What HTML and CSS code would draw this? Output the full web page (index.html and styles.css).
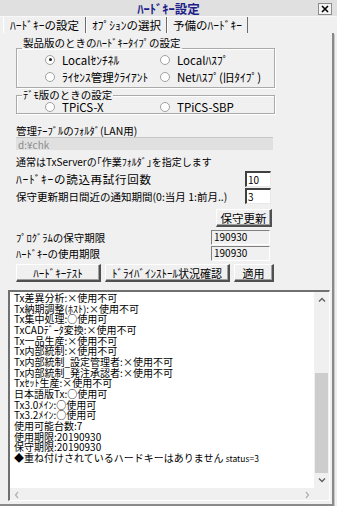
FILE: index.html
```html
<!DOCTYPE html>
<html lang="ja">
<head>
    <meta charset="UTF-8">
    <meta name="viewport" content="width=device-width, initial-scale=1.0">
    <title>ﾊｰﾄﾞｷｰ設定</title>
    <link rel="stylesheet" href="styles.css">
</head>
<body>
    <div class="window">
        <div class="titlebar">
            <span class="title">ﾊｰﾄﾞｷｰ設定</span>
            <span class="close-btn">
                <svg width="14" height="12" viewBox="0 0 14 12">
                    <rect x="0.5" y="0.5" width="13" height="11" fill="#f4f4f4" stroke="#8c8c8c"/>
                    <path d="M4 3 L10 9 M10 3 L4 9" stroke="#000" stroke-width="1.6"/>
                </svg>
            </span>
        </div>

        <div class="tabs">
            <div class="tab active">ﾊｰﾄﾞｷｰの設定</div>
            <div class="tab">ｵﾌﾟｼｮﾝの選択</div>
            <div class="tab">予備のﾊｰﾄﾞｷｰ</div>
        </div>

        <div class="panel">
            <div class="form">
                <!-- 製品版 -->
                <div class="group group-product">
                    <div class="group-title">製品版のときのﾊｰﾄﾞｷｰﾀｲﾌﾟの設定</div>
                    <div class="radios">
                        <label class="radio checked"><i></i>Localｾﾝﾁﾈﾙ</label>
                        <label class="radio"><i></i>Localﾊｽﾌﾟ</label>
                        <label class="radio"><i></i>ﾗｲｾﾝｽ管理ｸﾗｲｱﾝﾄ</label>
                        <label class="radio"><i></i>Netﾊｽﾌﾟ(旧ﾀｲﾌﾟ)</label>
                    </div>
                </div>

                <!-- デモ版 -->
                <div class="group group-demo">
                    <div class="group-title">ﾃﾞﾓ版のときの設定</div>
                    <div class="radios">
                        <label class="radio"><i></i>TPiCS-X</label>
                        <label class="radio"><i></i>TPiCS-SBP</label>
                    </div>
                </div>

                <div class="label folder-label">管理ﾃｰﾌﾞﾙのﾌｫﾙﾀﾞ(LAN用)</div>
                <div class="field-disabled">d:¥chk</div>
                <div class="label note">通常はTxServerの｢作業ﾌｫﾙﾀﾞ｣を指定します</div>

                <div class="row row-retry">
                    <span class="label">ﾊｰﾄﾞｷｰの読込再試行回数</span>
                    <span class="input">10</span>
                </div>
                <div class="row row-notice">
                    <span class="label">保守更新期日間近の通知期間(0:当月 1:前月..)</span>
                    <span class="input">3</span>
                </div>
                <div class="row-right">
                    <button class="btn btn-renew">保守更新</button>
                </div>
                <div class="row row-date">
                    <span class="label">ﾌﾟﾛｸﾞﾗﾑの保守期限</span>
                    <span class="readonly">190930</span>
                </div>
                <div class="row row-date">
                    <span class="label">ﾊｰﾄﾞｷｰの使用期限</span>
                    <span class="readonly">190930</span>
                </div>

                <div class="button-row">
                    <button class="btn btn-test">ﾊｰﾄﾞｷｰﾃｽﾄ</button>
                    <button class="btn btn-driver">ﾄﾞﾗｲﾊﾞｲﾝｽﾄｰﾙ状況確認</button>
                    <button class="btn btn-apply">適用</button>
                </div>
            </div>

            <!-- 結果 -->
            <div class="log">
                <div class="log-text">
                    <div>Tx差異分析:×使用不可</div>
                    <div>Tx納期調整(ﾎｽﾄ):×使用不可</div>
                    <div>Tx集中処理:○使用可</div>
                    <div>TxCADﾃﾞｰﾀ変換:×使用不可</div>
                    <div>Tx一品生産:×使用不可</div>
                    <div>Tx内部統制:×使用不可</div>
                    <div>Tx内部統制_設定管理者:×使用不可</div>
                    <div>Tx内部統制_発注承認者:×使用不可</div>
                    <div>Txｾｯﾄ生産:×使用不可</div>
                    <div>日本語版Tx:○使用可</div>
                    <div>Tx3.0ﾒｲﾝ:○使用可</div>
                    <div>Tx3.2ﾒｲﾝ:○使用可</div>
                    <div>使用可能台数:7</div>
                    <div>使用期限:20190930</div>
                    <div>保守期限:20190930</div>
                    <div>◆重ね付けされているハードキーはありません <span class="small">status=3</span></div>
                </div>
                <div class="vscroll">
                    <span class="arrow">
                        <svg width="8" height="5" viewBox="0 0 8 5"><path d="M1 4.5 L4 1.5 L7 4.5" fill="none" stroke="#606060" stroke-width="1.4"/></svg>
                    </span>
                    <span class="track"><span class="thumb"></span></span>
                    <span class="arrow">
                        <svg width="8" height="5" viewBox="0 0 8 5"><path d="M1 0.5 L4 3.5 L7 0.5" fill="none" stroke="#606060" stroke-width="1.4"/></svg>
                    </span>
                </div>
                <div class="hscroll">
                    <span class="arrow">
                        <svg width="5" height="8" viewBox="0 0 5 8"><path d="M4 1 L1.5 4 L4 7" fill="none" stroke="#b0b0b0" stroke-width="1.2"/></svg>
                    </span>
                    <span class="arrow">
                        <svg width="5" height="8" viewBox="0 0 5 8"><path d="M1 1 L3.5 4 L1 7" fill="none" stroke="#b0b0b0" stroke-width="1.2"/></svg>
                    </span>
                </div>
                <div class="corner"></div>
            </div>
        </div>
    </div>
</body>
</html>
```

FILE: styles.css
```css
body {
    margin: 0;
    background: #f4f4f4;
    font-family: "Noto Sans CJK JP", sans-serif;
    font-size: 11px;
    color: #000;
}
.window {
    width: 337px;
    height: 506px;
    overflow: hidden;
    background: #f0f0f0;
    display: flex;
    flex-direction: column;
}
.titlebar {
    height: 17px;
    display: flex;
    align-items: center;
    padding: 1px 0 0 19px;
    background: #e0e0e0;
    border-bottom: 1px solid #f8f8f8;
    box-sizing: border-box;
}
.title {
    flex: 1;
    text-align: center;
    font-weight: bold;
    font-size: 12.5px;
    line-height: 15px;
    color: #1e1e8a;
}
.close-btn {
    width: 14px;
    height: 12px;
    margin-right: 5px;
    display: flex;
}
.tabs {
    display: flex;
    height: 16px;
    padding-left: 3px;
}
.tab {
    padding: 0 5px;
    line-height: 16px;
    font-size: 11.5px;
    border-right: 1px solid #6c6c6c;
    border-left: 1px solid #ffffff;
}
.tab.active {
    padding: 0 6px;
}
.panel {
    flex: 1;
    margin-right: 3px;
    border-right: 2px solid #8a8a8a;
    border-bottom: 2px solid #8a8a8a;
    padding-left: 8px;
    padding-bottom: 3px;
    display: flex;
    flex-direction: column;
    box-shadow: 1px 1px 0 #c8c8c8;
}
.form {
    padding-left: 8px;
}
.group {
    width: 259px;
    box-sizing: border-box;
    border: 1px solid #aaaaaa;
    box-shadow: 1px 1px 0 #ffffff, inset 1px 1px 0 #ffffff;
}
.group-title {
    width: fit-content;
    line-height: 12px;
    padding: 0 1px;
    margin-left: 5px;
    background: #f0f0f0;
    font-size: 10.5px;
}
.group-product {
    margin-top: 15px;
    padding-bottom: 2px;
}
.group-product .group-title {
    margin-top: -12px;
}
.group-demo {
    margin-top: 7px;
}
.group-demo .group-title {
    margin-top: -7px;
}
.radios {
    display: grid;
    grid-template-columns: 115px 1fr;
    padding-left: 28px;
    margin-top: 2px;
    font-size: 11.5px;
}
.radio {
    display: flex;
    align-items: center;
    height: 17px;
    gap: 7px;
    white-space: nowrap;
}
.group-demo .radios {
    margin-top: -1px;
}
.group-demo .radio {
    height: 13px;
}
.radio i {
    width: 8px;
    height: 8px;
    border-radius: 50%;
    border: 1px solid #a0a0a0;
    background: #ffffff;
    display: flex;
    align-items: center;
    justify-content: center;
}
.radio.checked i::after {
    content: "";
    width: 3px;
    height: 3px;
    border-radius: 50%;
    background: #202020;
}
.label {
    line-height: 13px;
    white-space: nowrap;
}
.folder-label {
    margin-top: 10px;
    font-size: 10.5px;
}
.field-disabled {
    width: 257px;
    height: 13px;
    line-height: 13px;
    background: #e0e0e0;
    color: #8c8c8c;
    padding-left: 2px;
    box-sizing: border-box;
    border-top: 1px solid #c8c8c8;
    font-size: 10px;
}
.note {
    margin-top: 5px;
    font-size: 10px;
}
.row {
    display: flex;
    align-items: center;
    justify-content: space-between;
    width: 255px;
}
.row-retry {
    margin-top: 3px;
}
.row-retry .label {
    font-size: 11.5px;
    letter-spacing: 0.7px;
}
.row-notice .label {
    font-size: 10.5px;
}
.input {
    width: 26px;
    height: 16px;
    box-sizing: border-box;
    background: #ffffff;
    border-top: 2px solid #404040;
    border-left: 2px solid #404040;
    border-right: 1px solid #e8e8e8;
    border-bottom: 1px solid #e8e8e8;
    line-height: 13px;
    padding-left: 1px;
    font-size: 10px;
}
.row-notice {
    margin-top: 1px;
}
.row-right {
    width: 256px;
    display: flex;
    justify-content: flex-end;
    margin-top: 5px;
}
.btn {
    font-family: "Noto Sans CJK JP", sans-serif;
    font-size: 11px;
    height: 18px;
    padding: 0;
    background: #f0f0f0;
    border-top: 1px solid #ffffff;
    border-left: 1px solid #ffffff;
    border-right: 2px solid #505050;
    border-bottom: 2px solid #505050;
    box-shadow: inset -1px -1px 0 #a0a0a0;
    line-height: 14px;
    white-space: nowrap;
}
.btn-renew {
    width: 56px;
    font-size: 11.5px;
}
.row-date {
    margin-top: 3px;
    width: 254px;
}
.row-date .label {
    font-size: 10.5px;
}
.row-date + .row-date {
    margin-top: 1px;
}
.readonly {
    width: 59px;
    height: 15px;
    box-sizing: border-box;
    border-top: 1px solid #808080;
    border-left: 1px solid #808080;
    border-right: 1px solid #ffffff;
    border-bottom: 1px solid #ffffff;
    line-height: 12px;
    padding-left: 2px;
    font-size: 10px;
}
.button-row {
    display: flex;
    gap: 4px;
    margin-top: 3px;
}
.btn-test {
    width: 85px;
}
.btn-driver {
    width: 125px;
}
.btn-apply {
    width: 40px;
}
.log {
    flex: 1;
    margin-top: 8px;
    margin-right: 2px;
    display: grid;
    grid-template-columns: 1fr 15px;
    grid-template-rows: 1fr 12px;
    border-top: 2px solid #707070;
    border-left: 2px solid #707070;
    border-right: 1px solid #ffffff;
    border-bottom: 1px solid #ffffff;
    background: #ffffff;
    overflow: hidden;
}
.log-text {
    padding: 1px 0 0 4px;
    font-size: 10px;
    line-height: 10.67px;
    white-space: nowrap;
    min-width: 0;
}
.log-text .small {
    font-size: 8.5px;
}
.vscroll {
    display: flex;
    flex-direction: column;
    background: #f0f0f0;
}
.vscroll .arrow {
    height: 15px;
    display: flex;
    align-items: center;
    justify-content: center;
}
.vscroll .track {
    flex: 1;
    display: flex;
    flex-direction: column;
    justify-content: flex-end;
}
.thumb {
    height: 100px;
    margin: 0 1px;
    background: #cdcdcd;
}
.hscroll {
    display: flex;
    justify-content: space-between;
    align-items: center;
    background: #f0f0f0;
    padding: 0 4px;
}
.corner {
    background: #f0f0f0;
}
```
